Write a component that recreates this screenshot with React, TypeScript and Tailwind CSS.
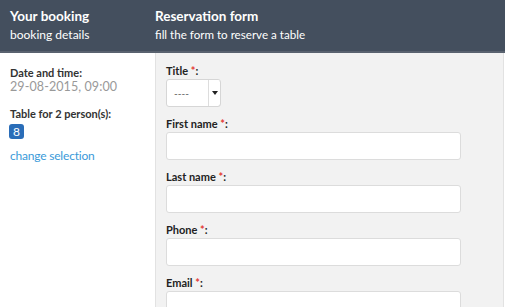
import React from "react";

const fields = ["First name", "Last name", "Phone", "Email"];

const Label: React.FC<{ text: string }> = ({ text }) => (
  <label className="block text-[11px] font-bold leading-[14px] text-[#222] mb-[1px]">
    {text} <span className="text-[#e53935]">*</span>:
  </label>
);

const App: React.FC = () => {
  return (
    <div className="w-[505px] h-[307px] overflow-hidden bg-white text-[#333]" style={{ fontFamily: "Lato, 'Open Sans', sans-serif" }}>
      <div className="flex h-[53px] bg-[#444f5e] border-b-2 border-[#59626f] text-white">
        <div className="w-[155px] pl-[10px] pt-[7px]">
          <h2 className="text-[13.5px] font-bold leading-[18px]">Your booking</h2>
          <p className="text-[12px] leading-[16px] mt-[2px]">booking details</p>
        </div>
        <div className="pt-[7px]">
          <h2 className="text-[13.5px] font-bold leading-[18px]">Reservation form</h2>
          <p className="text-[11.6px] leading-[16px] mt-[2px]">fill the form to reserve a table</p>
        </div>
      </div>
      <div className="flex h-full">
        <div className="w-[155px] pl-[10px] pt-[13px] text-[11px]">
          <p className="font-bold leading-[14px] text-[#333]">Date and time:</p>
          <p className="text-[#999] text-[12.5px] tracking-[0.1px] leading-[14px]">29-08-2015, 09:00</p>
          <p className="font-bold leading-[14px] mt-[13px] text-[#333]">Table for 2 person(s):</p>
          <span className="inline-block mt-[3px] -ml-[1px] rounded-[3px] bg-[#2a6db8] text-white text-[12px] leading-[15px] px-[4px] py-0">8</span>
          <p className="mt-[8px] leading-[14px] text-[12px] text-[#3a9ad9] -tracking-[0.2px]">change selection</p>
        </div>
        <div className="w-[349px] bg-[#f2f2f2] border-l border-r border-[#e2e2e2] pl-[10px] pt-[11px]">
          <Label text="Title" />
          <div className="flex w-[55px] h-[28px] rounded-[3px] border border-[#d6d6d6] bg-white overflow-hidden mb-[10px]">
            <div className="flex-1 flex items-center pl-[7px] text-[10px] text-[#555]">----</div>
            <div className="w-[12px] border-l border-[#ddd] bg-white flex items-center justify-center shadow-[1px_1px_1px_#999]">
              <svg width="6" height="4" viewBox="0 0 6 4"><path d="M0 0h6L3 4z" fill="#222" /></svg>
            </div>
          </div>
          {fields.map((f) => (
            <div key={f} className="mb-[10px]">
              <Label text={f} />
              <div className="w-[295px] h-[28px] rounded-[3px] border border-[#dcdcdc] bg-white" />
            </div>
          ))}
        </div>
      </div>
    </div>
  );
};

export default App;
